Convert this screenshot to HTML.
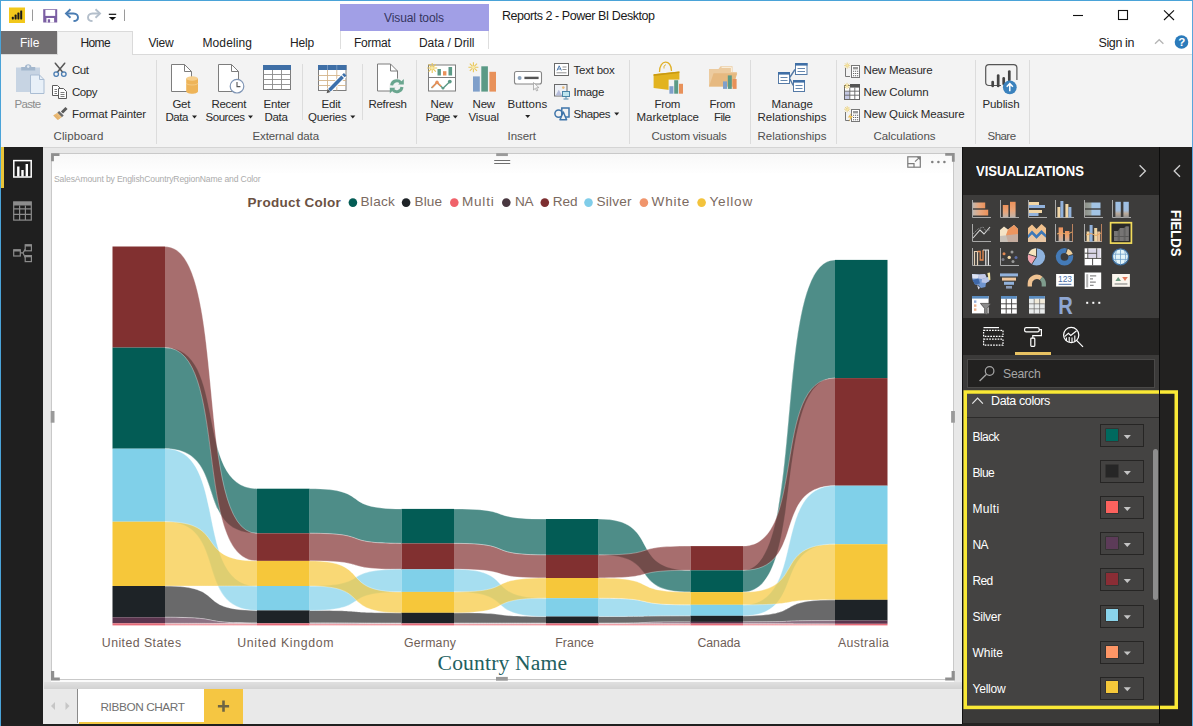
<!DOCTYPE html>
<html>
<head>
<meta charset="utf-8">
<title>Reports 2 - Power BI Desktop</title>
<style>
*{box-sizing:border-box;margin:0;padding:0}
html,body{width:1193px;height:726px;overflow:hidden;background:#fff}
body{font-family:"Liberation Sans",sans-serif;font-size:12px;color:#222;position:relative}
.abs{position:absolute}
.t{position:absolute;white-space:nowrap;line-height:1}
.c{transform:translateX(-50%);text-align:center}
svg{position:absolute;overflow:visible}
/* window frame */
#frame-top{left:0;top:0;width:1193px;height:1px;background:#4aa3d8}
#frame-left{left:0;top:0;width:1px;height:726px;background:#4aa3d8}
/* title bar */
#titlebar{left:0;top:0;width:1193px;height:32px;background:#fff}
#vistools{left:340px;top:4px;width:149px;height:27px;background:#a19fe6}
/* tab row */
#tabrow{left:0;top:32px;width:1193px;height:23px;background:#fff}
#filetab{left:1px;top:31px;width:56px;height:23px;background:#706e6f}
#hometab{left:57px;top:31px;width:75.5px;height:24px;background:#f3f3f3;border:1px solid #dadada;border-bottom:none}
#vtabs{left:340px;top:31px;width:149px;height:18px;background:#fff;border-left:1px solid #dedede;border-right:1px solid #dedede}
/* ribbon */
#ribbon{left:1px;top:54px;width:1192px;height:94px;background:#f3f3f3;border-top:1px solid #dadada;border-bottom:1px solid #d0d0d0}
.sep{position:absolute;width:1px;background:#dcdcdc}
.rl{font-size:12px;color:#333}
.gl{font-size:12px;color:#555}
/* left nav */
#leftnav{left:1px;top:147px;width:42px;height:579px;background:#1f1f1f}
/* canvas */
#canvas{left:43px;top:147px;width:919px;height:576px;background:#e8e8e8;border-top:1px solid #d4d4d4}
#visual{left:51px;top:153px;width:903px;height:527px;background:#fff;border:1px solid #c9c9c9;box-shadow:0 2px 0 #fbfbfb}
#vheader{left:52px;top:154px;width:901px;height:19px;background:linear-gradient(#f8f8f8,#fefefe)}
/* page tabs */
#pagetabs{left:43px;top:688.5px;width:919px;height:35.5px;background:#e9e9e9}
#statusbar{left:1px;top:724px;width:1192px;height:2px;background:#202020}
/* right panels */
#vizpane{left:962px;top:147px;width:197.5px;height:579px;background:#252423}
#fieldspane{left:1159.5px;top:147px;width:33.5px;height:579px;background:#222120}
</style>
</head>
<body>
<div class="abs" id="titlebar"></div>
<div class="abs" id="vistools"></div>
<div class="abs" id="tabrow"></div>
<div class="abs" id="vtabs"></div>
<div class="abs" id="filetab"></div>
<div class="abs" id="ribbon"></div>
<div class="abs" id="hometab"></div>
<svg width="1193" height="56" style="left:0;top:0" viewBox="0 0 1193 56" fill="none">
 <!-- pbi logo -->
 <rect x="9" y="7.5" width="16" height="15.5" fill="#f2c81b"/>
 <g fill="#1a1a1a"><rect x="11.8" y="16.8" width="2" height="2.6" rx=".6"/><rect x="14.6" y="14.6" width="2" height="4.8" rx=".6"/><rect x="17.4" y="12.6" width="2" height="6.8" rx=".6"/><rect x="20.2" y="10.4" width="2" height="9" rx=".6"/></g>
 <path d="M32.5 9.5 V21" stroke="#9a9a9a"/>
 <!-- save -->
 <path d="M43.2 9.2 H57.2 V22.5 H43.2 Z" fill="#7b5fa3"/>
 <rect x="45.4" y="9.9" width="9.8" height="6" fill="#fff"/>
 <rect x="46.4" y="18" width="7.7" height="4.5" fill="#fff"/><rect x="47.8" y="19.3" width="2.3" height="3.2" fill="#7b5fa3"/>
 <!-- undo -->
 <path d="M66.5 13.5 H73.5 C77 13.5 78 16 78 17.5 C78 19.5 76.5 21 73.5 21" stroke="#4a7db3" stroke-width="1.9"/>
 <path d="M70.5 9.3 L66 13.5 L70.5 17.7" stroke="#4a7db3" stroke-width="1.9"/>
 <!-- redo -->
 <path d="M99.5 13.5 H92.5 C89 13.5 88 16 88 17.5 C88 19.5 89.5 21 92.5 21" stroke="#b4bfcb" stroke-width="1.9"/>
 <path d="M95.5 9.3 L100 13.5 L95.5 17.7" stroke="#b4bfcb" stroke-width="1.9"/>
 <!-- qat dropdown -->
 <path d="M108.8 14.3 H116.2" stroke="#111" stroke-width="1.2"/><path d="M108.8 17 H116.2 L112.5 20.3 Z" fill="#111"/>
 <path d="M124.5 9.5 V21" stroke="#9a9a9a"/>
 <!-- window controls -->
 <path d="M1073 15.5 H1083" stroke="#111" stroke-width="1.1"/>
 <rect x="1118.5" y="10.5" width="9" height="9" stroke="#111" stroke-width="1.1"/>
 <path d="M1164 10.3 L1174 20 M1174 10.3 L1164 20" stroke="#111" stroke-width="1.1"/>
 <!-- collapse caret + help -->
 <path d="M1155 43.7 L1159.2 39.7 L1163.4 43.7" stroke="#b5b5b5" stroke-width="1.3"/>
 <circle cx="1181.5" cy="42" r="6.8" fill="#2b7bbb"/>
</svg>
<div class="t" style="left:1178.3px;top:36.5px;font-size:11.5px;font-weight:bold;color:#fff">?</div>
<div class="t" style="left:384px;top:11.8px;font-size:12px;color:#35355f;letter-spacing:-0.096px">Visual tools</div>
<div class="t" style="left:502px;top:10px;font-size:12.5px;color:#1a1a1a;letter-spacing:-0.459px">Reports 2 - Power BI Desktop</div>
<div class="t" style="left:20px;top:37px;font-size:12px;color:#fff;letter-spacing:0.039px">File</div>
<div class="t" style="left:80.5px;top:37px;font-size:12px;color:#222;letter-spacing:-0.629px">Home</div>
<div class="t" style="left:148.5px;top:37px;font-size:12px;color:#222;letter-spacing:-0.199px">View</div>
<div class="t" style="left:202.5px;top:37px;font-size:12px;color:#222;letter-spacing:0.100px">Modeling</div>
<div class="t" style="left:290px;top:37px;font-size:12px;color:#222;letter-spacing:-0.172px">Help</div>
<div class="t" style="left:354px;top:37px;font-size:12px;color:#222;letter-spacing:-0.253px">Format</div>
<div class="t" style="left:419px;top:37px;font-size:12px;color:#222;letter-spacing:-0.043px">Data / Drill</div>
<div class="t" style="left:1098.5px;top:36.5px;font-size:12.5px;color:#222;letter-spacing:-0.391px">Sign in</div>

<style>
.r{font-size:11.5px;color:#2a2a2a}
.g{font-size:11.5px;color:#505050;top:131.3px}
</style>
<!-- separators -->
<div class="sep" style="left:156px;top:60px;height:84px"></div>
<div class="sep" style="left:302px;top:64px;height:56px"></div>
<div class="sep" style="left:362px;top:64px;height:56px"></div>
<div class="sep" style="left:416px;top:60px;height:84px"></div>
<div class="sep" style="left:629px;top:60px;height:84px"></div>
<div class="sep" style="left:750px;top:60px;height:84px"></div>
<div class="sep" style="left:836px;top:60px;height:84px"></div>
<div class="sep" style="left:975px;top:60px;height:84px"></div>
<div class="sep" style="left:1029px;top:60px;height:84px"></div>
<!-- clipboard -->
<div class="t r" style="left:14.5px;top:98.5px;color:#8c8c8c;letter-spacing:-0.684px">Paste</div>
<div class="t r" style="left:72px;top:64.5px;letter-spacing:-0.469px">Cut</div>
<div class="t r" style="left:72px;top:86.5px;letter-spacing:-0.465px">Copy</div>
<div class="t r" style="left:72px;top:108.5px;letter-spacing:-0.147px">Format Painter</div>
<div class="t g" style="left:53.5px;letter-spacing:0.085px">Clipboard</div>
<!-- external data -->
<div class="t r" style="left:172.5px;top:98.5px;letter-spacing:-0.349px">Get</div>
<div class="t r" style="left:165.5px;top:111.5px;letter-spacing:-0.449px">Data</div>
<div class="t r" style="left:211.5px;top:98.5px;letter-spacing:-0.323px">Recent</div>
<div class="t r" style="left:205.5px;top:111.5px;letter-spacing:-0.455px">Sources</div>
<div class="t r" style="left:263.5px;top:98.5px;letter-spacing:-0.200px">Enter</div>
<div class="t r" style="left:264.5px;top:111.5px;letter-spacing:-0.324px">Data</div>
<div class="t r" style="left:321.5px;top:98.5px;letter-spacing:-0.207px">Edit</div>
<div class="t r" style="left:308px;top:111.5px;letter-spacing:-0.254px">Queries</div>
<div class="t r" style="left:368.5px;top:98.5px;letter-spacing:-0.326px">Refresh</div>
<div class="t g" style="left:252.5px;letter-spacing:-0.097px">External data</div>
<!-- insert -->
<div class="t r" style="left:430.5px;top:98.5px;letter-spacing:-0.172px">New</div>
<div class="t r" style="left:425.5px;top:111.5px;letter-spacing:-0.715px">Page</div>
<div class="t r" style="left:472.5px;top:98.5px;letter-spacing:-0.172px">New</div>
<div class="t r" style="left:468.5px;top:111.5px;letter-spacing:-0.104px">Visual</div>
<div class="t r" style="left:507.5px;top:98.5px;letter-spacing:0.143px">Buttons</div>
<div class="t r" style="left:573.5px;top:64.5px;letter-spacing:-0.229px">Text box</div>
<div class="t r" style="left:573.5px;top:86.5px;letter-spacing:-0.294px">Image</div>
<div class="t r" style="left:573.5px;top:108.5px;letter-spacing:-0.419px">Shapes</div>
<div class="t g" style="left:507.5px;letter-spacing:-0.044px">Insert</div>
<!-- custom visuals -->
<div class="t r" style="left:654.5px;top:98.5px;letter-spacing:-0.336px">From</div>
<div class="t r" style="left:636.5px;top:111.5px;letter-spacing:-0.013px">Marketplace</div>
<div class="t r" style="left:709.5px;top:98.5px;letter-spacing:-0.336px">From</div>
<div class="t r" style="left:714px;top:111.5px;letter-spacing:-0.508px">File</div>
<div class="t g" style="left:651.5px;letter-spacing:-0.212px">Custom visuals</div>
<!-- relationships -->
<div class="t r" style="left:771.5px;top:98.5px;letter-spacing:-0.010px">Manage</div>
<div class="t r" style="left:757.5px;top:111.5px;letter-spacing:-0.004px">Relationships</div>
<div class="t g" style="left:757.5px;letter-spacing:-0.004px">Relationships</div>
<!-- calculations -->
<div class="t r" style="left:863.5px;top:64.5px;letter-spacing:-0.178px">New Measure</div>
<div class="t r" style="left:863.5px;top:86.5px;letter-spacing:-0.083px">New Column</div>
<div class="t r" style="left:863.5px;top:108.5px;letter-spacing:-0.150px">New Quick Measure</div>
<div class="t g" style="left:873.5px;letter-spacing:-0.055px">Calculations</div>
<!-- share -->
<div class="t r" style="left:982.5px;top:98.5px;letter-spacing:-0.103px">Publish</div>
<div class="t g" style="left:987.5px;letter-spacing:-0.537px">Share</div>
<!-- dropdown arrows -->
<svg width="1193" height="148" style="left:0;top:0" viewBox="0 0 1193 148" fill="#222">
 <path d="M192 115.5 h5 l-2.5 3z"/><path d="M248 115.5 h5 l-2.5 3z"/><path d="M350.3 115.5 h5 l-2.5 3z"/>
 <path d="M452.8 115.5 h5 l-2.5 3z"/><path d="M525.2 115 h5 l-2.5 3z"/><path d="M614.2 112.5 h5 l-2.5 3z"/>
</svg>
<svg width="1193" height="148" style="left:0;top:0" viewBox="0 0 1193 148" fill="none">
<defs>
 <g id="sun" stroke="#e9c75a" stroke-width="1.1"><path d="M0 -5 V5 M-5 0 H5 M-3.6 -3.6 L3.6 3.6 M-3.6 3.6 L3.6 -3.6"/><circle r="1.6" fill="#f7e9a8" stroke="none"/></g>
 <g id="page"><path d="M0.5 0.5 H13.5 L20.5 7.5 V27.5 H0.5 Z" fill="#fff" stroke="#7d7d7d"/><path d="M13.5 0.5 V7.5 H20.5" stroke="#7d7d7d"/></g>
 <g id="minibars"><rect x="0" y="6" width="4" height="7.5" fill="#7f9fca"/><rect x="4.8" y="0" width="4" height="13.5" fill="#5b9a86"/><rect x="9.6" y="3.6" width="4" height="9.9" fill="#e8915a"/></g>
</defs>
<!-- Paste -->
<rect x="16" y="67.5" width="24" height="24.5" fill="#c7d4e3"/>
<path d="M21.2 70.5 V67 H25 C25 63.4 31.4 63.4 31.4 67 H35.2 V70.5 Z" fill="#a3b7cd"/>
<circle cx="28.2" cy="66.6" r="1.3" fill="#e3eaf2"/>
<path d="M30.5 75 H39.5 L44 79.5 V93.5 H30.5 Z" fill="#e8f0f8" stroke="#aabdd3"/>
<path d="M39.5 75 V79.5 H44" stroke="#aabdd3"/>
<!-- Cut -->
<g stroke="#575757" stroke-width="1.5" stroke-linecap="round"><path d="M55.3 63.2 L62.7 72.3"/><path d="M64.7 63.2 L57.3 72.3"/></g>
<circle cx="56.2" cy="74.1" r="2.3" stroke="#4a7db3" stroke-width="1.3"/><circle cx="63.8" cy="74.1" r="2.3" stroke="#4a7db3" stroke-width="1.3"/>
<!-- Copy -->
<path d="M52.5 85.5 H57.5 L60.5 88.5 V95.5 H52.5 Z" fill="#fff" stroke="#5a5a5a"/>
<path d="M54.5 89.5 H57 M54.5 91.5 H57 M54.5 93.5 H57" stroke="#5a5a5a" stroke-width=".8"/>
<path d="M58.5 88.5 H63.5 L66.5 91.5 V98.5 H58.5 Z" fill="#fff" stroke="#5a5a5a"/>
<path d="M60.5 92.5 H64.5 M60.5 94.5 H64.5 M60.5 96.5 H64.5" stroke="#5a5a5a" stroke-width=".8"/>
<!-- Format painter -->
<path d="M62 112.5 L66.5 108" stroke="#5a5a5a" stroke-width="3"/>
<path d="M58.2 111.8 L62.8 116.4" stroke="#6a6a6a" stroke-width="2.6"/>
<path d="M57.3 112.8 L61.8 117.3 L57.6 120 L53.2 115.6 Z" fill="#ecbc78"/>
<path d="M55.2 114.6 L59.6 119 M54 115.2 L58.4 119.6" stroke="#d9a55c" stroke-width=".6"/>
<!-- Get Data -->
<use href="#page" x="171" y="64"/>
<path d="M186.2 78.5 V91.3 C186.2 94.6 198 94.6 198 91.3 V78.5 Z" fill="#eeb458"/>
<ellipse cx="192.1" cy="78.5" rx="5.9" ry="2.2" fill="#f6cf8e"/>
<path d="M186.2 83 C186.2 85.6 198 85.6 198 83" stroke="#f6cf8e" stroke-width=".8"/>
<!-- Recent Sources -->
<use href="#page" x="218" y="64"/>
<circle cx="237" cy="86.2" r="6.8" fill="#fff" stroke="#7f95b5" stroke-width="1.2"/>
<path d="M237 82 V86.6 H240.4" stroke="#555" stroke-width="1.1"/>
<!-- Enter Data -->
<rect x="263.5" y="65.5" width="27" height="24" fill="#fff" stroke="#7d7d7d"/>
<rect x="263" y="65" width="28" height="5" fill="#3f6fa6"/>
<path d="M263.5 74.5 H290.5 M263.5 79.5 H290.5 M263.5 84.5 H290.5 M272.5 70 V89.5 M281.5 70 V89.5" stroke="#8a8a8a" stroke-width=".9"/>
<!-- Edit Queries -->
<rect x="318.5" y="65.5" width="27.5" height="25" fill="#fff" stroke="#7d7d7d"/>
<rect x="318" y="65" width="28.5" height="5" fill="#3f6fa6"/>
<path d="M318.5 75.5 H346 M318.5 80.5 H346 M318.5 85.5 H346 M327.5 70 V90.5 M336.8 70 V90.5" stroke="#d4b48a" stroke-width=".9"/>
<path d="M327.5 65 V70 M336.8 65 V70" stroke="#7fa0c8" stroke-width=".8"/>
<path d="M329.2 90.4 L344.2 75.2" stroke="#fff" stroke-width="5.5"/>
<path d="M329.4 90.2 L342.6 76.8" stroke="#3c70ab" stroke-width="3.6"/>
<path d="M343.4 76 L345.2 74.2" stroke="#3c70ab" stroke-width="3.6"/>
<path d="M326.6 93.2 L327.6 89.3 L330.4 92.1 Z" fill="#555"/>
<!-- Refresh -->
<use href="#page" x="377" y="63.5"/>
<circle cx="396.8" cy="86.2" r="7.6" fill="#f3f3f3"/>
<path d="M391.6 85.4 A5.3 5.3 0 0 1 400.9 82.6" stroke="#6aa68f" stroke-width="3"/>
<path d="M402 87 A5.3 5.3 0 0 1 392.7 89.8" stroke="#6aa68f" stroke-width="3"/>
<path d="M398.2 84.6 H403.8 V79 Z" fill="#6aa68f"/><path d="M395.4 87.8 H389.8 V93.4 Z" fill="#6aa68f"/>
</svg>
<svg width="1193" height="148" style="left:0;top:0" viewBox="0 0 1193 148" fill="none">
<!-- New Page -->
<rect x="428.5" y="65" width="27" height="26" fill="#fff" stroke="#7d7d7d"/>
<path d="M428.5 77.5 H455.5" stroke="#7d7d7d"/>
<rect x="437.5" y="69" width="3.4" height="6.5" fill="#5b9a86"/><rect x="443" y="71.2" width="3.4" height="4.3" fill="#e8915a"/><rect x="448.5" y="67" width="3.6" height="8.5" fill="#5b9a86"/>
<path d="M431.5 88 L437 82.5 L443 88.2 L449.5 82" stroke="#5b9a86" stroke-width="1.4"/>
<path d="M432 87.6 L437 82.5 L441 86.2" stroke="#e8915a" stroke-width="1.6"/>
<circle cx="437" cy="82.3" r="1.7" fill="#e8915a"/><circle cx="449.8" cy="81.6" r="1.9" fill="#5b9a86"/><circle cx="443" cy="88.2" r="1.3" fill="#5b9a86"/>
<use href="#sun" x="432.2" y="68"/>
<!-- New Visual -->
<rect x="473" y="76.4" width="6.8" height="15.2" fill="#7f9fca"/><rect x="481.3" y="66.3" width="6.6" height="25.3" fill="#5b9a86"/><rect x="489.4" y="71.8" width="6.6" height="19.8" fill="#e8915a"/>
<use href="#sun" x="473.4" y="67.3"/>
<!-- Buttons -->
<rect x="514.5" y="71.5" width="27" height="12.5" rx="2" fill="#fff" stroke="#868686" stroke-width="1.1"/>
<circle cx="519.6" cy="77.9" r="2" fill="#8ba3bd"/><path d="M524.4 77.9 H538.6" stroke="#555" stroke-width="2.4"/>
<path d="M533.5 82.5 V90 L535.3 88.3 L536.6 91 L537.8 90.4 L536.5 87.8 L538.9 87.6 Z" fill="#f8f8f8" stroke="#999" stroke-width=".7"/>
<!-- Text box -->
<rect x="554.5" y="63.5" width="14" height="12" fill="#fff" stroke="#6a6a6a"/>
<path d="M557 70.5 L559.2 65.8 L561.4 70.5 M557.8 69 H560.6" stroke="#3f6fa6" stroke-width=".9"/><path d="M562.5 67 H566.5 M562.5 69.5 H566.5 M556.5 72.8 H566.5" stroke="#777" stroke-width=".8"/>
<!-- Image -->
<rect x="554.5" y="84.5" width="12.5" height="11.5" fill="#eef1f6" stroke="#6a6a6a"/>
<circle cx="563.3" cy="87.6" r="1.3" fill="#e8b878"/><path d="M555.5 95.5 L558.8 89.8 L562 95.5 Z" fill="#b6bddb"/>
<rect x="562.5" y="91.5" width="7" height="5" fill="#bfe6ee" stroke="#4a86a8"/><path d="M566 96.5 V98.6 M563.5 99 H568.5" stroke="#4a86a8"/>
<!-- Shapes -->
<circle cx="558.6" cy="113.6" r="3.7" stroke="#3f75aa" stroke-width="1.5"/>
<rect x="561.8" y="108" width="7.2" height="9" stroke="#3f75aa" stroke-width="1.5"/>
<path d="M563.3 112 L560 119.8 H566.6 Z" fill="#f3f3f3" stroke="#3f75aa" stroke-width="1.5" stroke-linejoin="round"/>
<!-- From Marketplace -->
<path d="M659.5 72 C659.5 59 671.5 59 671.5 71" stroke="#e0b22a" stroke-width="1.3"/>
<path d="M664 68.5 V66 M664 66 L666 64.6" stroke="#e0b22a" stroke-width=".9"/>
<path d="M653.6 74.2 L679.4 71.4 V91.2 L653.6 88 Z" fill="#e2b31f"/>
<path d="M653.6 74.2 L679.4 71.4 L679.4 73 L653.6 76 Z" fill="#c99a10"/>
<rect x="668.6" y="79.6" width="15.2" height="14.6" fill="#f3f3f3"/>
<use href="#minibars" x="669.4" y="80.2"/>
<!-- From File -->
<path d="M709 86.4 V69 H718.5 L720.5 66.2 H732.5 V72 H737 L733.2 86.4 Z" fill="#eccb9f"/>
<path d="M709 86.4 L713.6 73.2 H737.2 L733.2 86.4 Z" fill="#e6b980"/>
<path d="M721.6 67.4 H731.4 V72" stroke="#fbf1df" stroke-width="1"/>
<rect x="722" y="74.8" width="15.4" height="14.4" fill="#f3f3f3" fill-opacity=".0"/>
<use href="#minibars" x="723" y="75.4"/>
<!-- Manage relationships -->
<path d="M789.7 77.5 L795 69.5 M789.7 78.5 L793.2 85.5" stroke="#557aa6" stroke-width="1.4"/>
<g stroke="#557aa6"><rect x="778.5" y="72.5" width="11" height="11" fill="#fff"/><rect x="795.5" y="63.5" width="11.5" height="11" fill="#fff"/><rect x="793.5" y="80.5" width="11" height="11" fill="#fff"/></g>
<g fill="#3f6fa6"><rect x="778" y="72" width="12" height="2.6"/><rect x="795" y="63" width="12.5" height="2.6"/><rect x="793" y="80" width="12" height="2.6"/></g>
<path d="M780.5 77.5 H787.5 M780.5 80.5 H787.5 M797.5 68.5 H805 M797.5 71.5 H805 M795.5 85.5 H802.5 M795.5 88.5 H802.5" stroke="#557aa6" stroke-width=".9"/>
<!-- New Measure -->
<g id="calc"><path d="M845.5 68 V76.5 H850" stroke="#777"/><rect x="851.5" y="65.5" width="8" height="12" fill="#fff" stroke="#777"/><rect x="853" y="67" width="5" height="2.4" fill="#999"/>
<path d="M853 71.3 h1.2 M855 71.3 h1.2 M857 71.3 h1.2 M853 73.5 h1.2 M855 73.5 h1.2 M857 73.5 h1.2 M853 75.7 h1.2 M855 75.7 h1.2 M857 75.7 h1.2" stroke="#666" stroke-width="1.1"/></g>
<g transform="translate(847.2 65.6) scale(.62)"><use href="#sun"/></g>
<!-- New Column -->
<rect x="844.5" y="85.5" width="15" height="14" fill="#fff" stroke="#666"/>
<rect x="850" y="84" width="10" height="3.6" fill="#555"/>
<rect x="845" y="91.5" width="4.6" height="7.5" fill="#c4c8e3"/>
<path d="M844.5 91.2 H859.5 M844.5 95.2 H859.5 M849.8 87.5 V99.5 M854.8 87.5 V99.5" stroke="#666" stroke-width=".9"/>
<g transform="translate(847 86) scale(.62)"><use href="#sun"/></g>
<!-- New Quick Measure -->
<use href="#calc" y="44"/>
<g transform="translate(847.2 109.2) scale(.62)"><use href="#sun"/></g>
<path d="M851.5 112.5 L847.8 117.6 H850.2 L848.6 122 L853 116 H850.4 Z" fill="#eec25a"/>
<!-- Publish -->
<path d="M1001 85.5 H989 Q985.7 85.5 985.7 82.3 V67.8 Q985.7 64.6 989 64.6 H1013.6 Q1016.9 64.6 1016.9 67.8 V80" stroke="#555" stroke-width="1.2"/>
<g stroke="#444" stroke-width="2.7" stroke-linecap="round"><path d="M992.7 82 V86"/><path d="M998.2 75.6 V86"/><path d="M1003.7 78.4 V84"/><path d="M1009.3 71.6 V80"/></g>
<circle cx="1009.8" cy="87.3" r="6.9" fill="#3b82bd"/>
<path d="M1009.8 91.2 V84 M1006.7 86.7 L1009.8 83.6 L1012.9 86.7" stroke="#fff" stroke-width="1.5"/>
</svg>



<div class="abs" id="leftnav"></div>
<div class="abs" style="left:1px;top:147px;width:3px;height:41px;background:#e8c43a"></div>
<svg width="44" height="300" style="left:0;top:0" viewBox="0 0 44 300" fill="none">
 <!-- report -->
 <rect x="13.8" y="160.6" width="17.4" height="16.4" stroke="#fff" stroke-width="1.5"/>
 <path d="M18.3 176.5 V166.5 M22.5 176.5 V170 M26.8 176.5 V164" stroke="#fff" stroke-width="2.4"/>
 <!-- data -->
 <g stroke="#8c8c8c" stroke-width="1.2"><rect x="13.7" y="201.9" width="17.6" height="18.2"/>
 <path d="M13.7 208.8 H31.3 M13.7 214.4 H31.3 M19.6 205.5 V220 M25.4 205.5 V220"/></g>
 <rect x="13.7" y="201.9" width="17.6" height="3.6" fill="#8c8c8c"/>
 <!-- model -->
 <g stroke="#8c8c8c" stroke-width="1.2"><rect x="13.7" y="249.8" width="6.6" height="6.2"/><rect x="25.2" y="244.8" width="6.2" height="6"/><rect x="25.2" y="255.6" width="6.2" height="6"/>
 <path d="M20.3 252.9 H23 M23 252.9 L25.2 249.4 M23 252.9 L25.2 257.6"/></g>
 <path d="M13.7 250.4 H20.3 M25.2 245.4 H31.4 M25.2 256.2 H31.4" stroke="#8c8c8c" stroke-width="2"/>
</svg>

<div class="abs" id="canvas"></div>
<div class="abs" id="visual"></div>
<div class="abs" id="vheader"></div>
<!-- visual chrome -->
<svg width="1193" height="726" style="left:0;top:0" viewBox="0 0 1193 726" fill="none">
 <!-- corner handles -->
 <g stroke="#8f8f8f" stroke-width="2.8">
  <path d="M52.5 161.3 V154.7 H59.5"/><path d="M945.2 154.4 H953.3 V161.7"/>
 </g>
 <g stroke="#8f8f8f" stroke-width="3.2">
  <path d="M52.6 671 V679 H59.8"/><path d="M945.2 679 H953.2 V671"/>
 </g>
 <g stroke="#9a9a9a" stroke-width="3.8">
  <path d="M52.6 411 V422.7"/><path d="M953 411 V422.7"/><path d="M496 678.8 H507.8"/>
 </g>
 <!-- drag grip -->
 <g stroke="#6e6e6e" stroke-width="1.1"><path d="M494.2 160.5 H510.2 M494.2 163.5 H510.2"/></g>
 <path d="M496.2 154.6 H507.9" stroke="#9a9a9a" stroke-width="2.9"/>
 <!-- focus icon -->
 <g stroke="#7c7c7c" stroke-width="1.2"><rect x="907.8" y="156.8" width="12.5" height="10.4"/><path d="M907.8 163.6 H914 V167.2"/><path d="M915 161.6 L919.6 157.4"/></g>
 <path d="M916.6 156.8 H920.3 V160.4 Z" fill="#7c7c7c"/>
 <g fill="#808080"><circle cx="932.3" cy="162" r="1.3"/><circle cx="938.4" cy="162" r="1.3"/><circle cx="944.4" cy="162" r="1.3"/></g>
</svg>
<div class="t" style="left:54px;top:174.6px;font-size:8.6px;color:#ababab;letter-spacing:-0.134px">SalesAmount by EnglishCountryRegionName and Color</div>
<!-- legend -->
<div class="t" id="lgt" style="left:247.6px;top:195.5px;font-size:13.5px;font-weight:bold;color:#6b5142;letter-spacing:0.269px">Product Color</div>
<div class="t lg" style="left:360.5px;letter-spacing:0.290px">Black</div>
<div class="t lg" style="left:414.4px;letter-spacing:0.170px">Blue</div>
<div class="t lg" style="left:461.9px;letter-spacing:0.799px">Multi</div>
<div class="t lg" style="left:514.9px;letter-spacing:-0.145px">NA</div>
<div class="t lg" style="left:552.7px;letter-spacing:-0.013px">Red</div>
<div class="t lg" style="left:596.4px;letter-spacing:0.250px">Silver</div>
<div class="t lg" style="left:651.6px;letter-spacing:0.730px">White</div>
<div class="t lg" style="left:709.5px;letter-spacing:0.784px">Yellow</div>
<svg width="1193" height="726" style="left:0;top:0" viewBox="0 0 1193 726">
 <circle cx="352.9" cy="202.6" r="4.3" fill="#035c55"/>
 <circle cx="406.1" cy="202.6" r="4.3" fill="#1e2327"/>
 <circle cx="454.3" cy="202.6" r="4.3" fill="#f0626a"/>
 <circle cx="506.3" cy="202.6" r="4.3" fill="#493840"/>
 <circle cx="544.8" cy="202.6" r="4.3" fill="#7d2e30"/>
 <circle cx="588.5" cy="202.6" r="4.3" fill="#80cde9"/>
 <circle cx="643.9" cy="202.6" r="4.3" fill="#f0956c"/>
 <circle cx="701.6" cy="202.6" r="4.3" fill="#f3c33c"/>
</svg>
<style>.lg{top:195.1px;font-size:13.6px;color:#7b6a5f}
.ax{top:637.2px;font-size:12.3px;color:#6f6057}</style>
<svg id="chart" width="1193" height="726" style="left:0;top:0" viewBox="0 0 1193 726">
<path d="M165.0,347.6 C229.4,347.6 192.6,488.7 257.0,488.7 L257.0,533.3 C192.6,533.3 229.4,448.7 165.0,448.7 Z" fill="#035c55" fill-opacity="0.7"/>
<path d="M165.0,347.6 C229.4,347.6 192.6,488.7 257.0,488.7 M257.0,533.3 C192.6,533.3 229.4,448.7 165.0,448.7" fill="none" stroke="#fff" stroke-opacity="0.4" stroke-width="0.8"/>
<path d="M309.5,488.7 C373.9,488.7 337.1,508.9 401.5,508.9 L401.5,543.4 C337.1,543.4 373.9,533.3 309.5,533.3 Z" fill="#035c55" fill-opacity="0.7"/>
<path d="M309.5,488.7 C373.9,488.7 337.1,508.9 401.5,508.9 M401.5,543.4 C337.1,543.4 373.9,533.3 309.5,533.3" fill="none" stroke="#fff" stroke-opacity="0.4" stroke-width="0.8"/>
<path d="M454.0,508.9 C518.4,508.9 481.6,519.0 546.0,519.0 L546.0,554.9 C481.6,554.9 518.4,543.4 454.0,543.4 Z" fill="#035c55" fill-opacity="0.7"/>
<path d="M454.0,508.9 C518.4,508.9 481.6,519.0 546.0,519.0 M546.0,554.9 C481.6,554.9 518.4,543.4 454.0,543.4" fill="none" stroke="#fff" stroke-opacity="0.4" stroke-width="0.8"/>
<path d="M598.5,519.0 C662.9,519.0 626.1,570.3 690.5,570.3 L690.5,592.1 C626.1,592.1 662.9,554.9 598.5,554.9 Z" fill="#035c55" fill-opacity="0.7"/>
<path d="M598.5,519.0 C662.9,519.0 626.1,570.3 690.5,570.3 M690.5,592.1 C626.1,592.1 662.9,554.9 598.5,554.9" fill="none" stroke="#fff" stroke-opacity="0.4" stroke-width="0.8"/>
<path d="M743.0,570.3 C807.4,570.3 770.6,259.9 835.0,259.9 L835.0,378.1 C770.6,378.1 807.4,592.1 743.0,592.1 Z" fill="#035c55" fill-opacity="0.7"/>
<path d="M743.0,570.3 C807.4,570.3 770.6,259.9 835.0,259.9 M835.0,378.1 C770.6,378.1 807.4,592.1 743.0,592.1" fill="none" stroke="#fff" stroke-opacity="0.4" stroke-width="0.8"/>
<path d="M165.0,586.0 C229.4,586.0 192.6,610.4 257.0,610.4 L257.0,623.0 C192.6,623.0 229.4,617.3 165.0,617.3 Z" fill="#2a2a2b" fill-opacity="0.7"/>
<path d="M165.0,586.0 C229.4,586.0 192.6,610.4 257.0,610.4 M257.0,623.0 C192.6,623.0 229.4,617.3 165.0,617.3" fill="none" stroke="#fff" stroke-opacity="0.4" stroke-width="0.8"/>
<path d="M309.5,610.4 C373.9,610.4 337.1,612.8 401.5,612.8 L401.5,623.2 C337.1,623.2 373.9,623.0 309.5,623.0 Z" fill="#2a2a2b" fill-opacity="0.7"/>
<path d="M309.5,610.4 C373.9,610.4 337.1,612.8 401.5,612.8 M401.5,623.2 C337.1,623.2 373.9,623.0 309.5,623.0" fill="none" stroke="#fff" stroke-opacity="0.4" stroke-width="0.8"/>
<path d="M454.0,612.8 C518.4,612.8 481.6,616.5 546.0,616.5 L546.0,623.2 C481.6,623.2 518.4,623.2 454.0,623.2 Z" fill="#2a2a2b" fill-opacity="0.7"/>
<path d="M454.0,612.8 C518.4,612.8 481.6,616.5 546.0,616.5 M546.0,623.2 C481.6,623.2 518.4,623.2 454.0,623.2" fill="none" stroke="#fff" stroke-opacity="0.4" stroke-width="0.8"/>
<path d="M598.5,616.5 C662.9,616.5 626.1,615.8 690.5,615.8 L690.5,621.9 C626.1,621.9 662.9,623.2 598.5,623.2 Z" fill="#2a2a2b" fill-opacity="0.7"/>
<path d="M598.5,616.5 C662.9,616.5 626.1,615.8 690.5,615.8 M690.5,621.9 C626.1,621.9 662.9,623.2 598.5,623.2" fill="none" stroke="#fff" stroke-opacity="0.4" stroke-width="0.8"/>
<path d="M743.0,615.8 C807.4,615.8 770.6,599.8 835.0,599.8 L835.0,620.5 C770.6,620.5 807.4,621.9 743.0,621.9 Z" fill="#2a2a2b" fill-opacity="0.7"/>
<path d="M743.0,615.8 C807.4,615.8 770.6,599.8 835.0,599.8 M835.0,620.5 C770.6,620.5 807.4,621.9 743.0,621.9" fill="none" stroke="#fff" stroke-opacity="0.4" stroke-width="0.8"/>
<path d="M165.0,623.3 C229.4,623.3 192.6,623.4 257.0,623.4 L257.0,625.4 C192.6,625.4 229.4,625.4 165.0,625.4 Z" fill="#e8707c" fill-opacity="0.7"/>
<path d="M165.0,623.3 C229.4,623.3 192.6,623.4 257.0,623.4 M257.0,625.4 C192.6,625.4 229.4,625.4 165.0,625.4" fill="none" stroke="#fff" stroke-opacity="0.4" stroke-width="0.8"/>
<path d="M309.5,623.4 C373.9,623.4 337.1,623.5 401.5,623.5 L401.5,625.4 C337.1,625.4 373.9,625.4 309.5,625.4 Z" fill="#e8707c" fill-opacity="0.7"/>
<path d="M309.5,623.4 C373.9,623.4 337.1,623.5 401.5,623.5 M401.5,625.4 C337.1,625.4 373.9,625.4 309.5,625.4" fill="none" stroke="#fff" stroke-opacity="0.4" stroke-width="0.8"/>
<path d="M454.0,623.5 C518.4,623.5 481.6,623.5 546.0,623.5 L546.0,625.4 C481.6,625.4 518.4,625.4 454.0,625.4 Z" fill="#e8707c" fill-opacity="0.7"/>
<path d="M454.0,623.5 C518.4,623.5 481.6,623.5 546.0,623.5 M546.0,625.4 C481.6,625.4 518.4,625.4 454.0,625.4" fill="none" stroke="#fff" stroke-opacity="0.4" stroke-width="0.8"/>
<path d="M598.5,623.5 C662.9,623.5 626.1,623.6 690.5,623.6 L690.5,625.4 C626.1,625.4 662.9,625.4 598.5,625.4 Z" fill="#e8707c" fill-opacity="0.7"/>
<path d="M598.5,623.5 C662.9,623.5 626.1,623.6 690.5,623.6 M690.5,625.4 C626.1,625.4 662.9,625.4 598.5,625.4" fill="none" stroke="#fff" stroke-opacity="0.4" stroke-width="0.8"/>
<path d="M743.0,623.6 C807.4,623.6 770.6,623.8 835.0,623.8 L835.0,625.4 C770.6,625.4 807.4,625.4 743.0,625.4 Z" fill="#e8707c" fill-opacity="0.7"/>
<path d="M743.0,623.6 C807.4,623.6 770.6,623.8 835.0,623.8 M835.0,625.4 C770.6,625.4 807.4,625.4 743.0,625.4" fill="none" stroke="#fff" stroke-opacity="0.4" stroke-width="0.8"/>
<path d="M165.0,617.3 C229.4,617.3 192.6,623.0 257.0,623.0 L257.0,623.4 C192.6,623.4 229.4,623.3 165.0,623.3 Z" fill="#5a344e" fill-opacity="0.7"/>
<path d="M165.0,617.3 C229.4,617.3 192.6,623.0 257.0,623.0 M257.0,623.4 C192.6,623.4 229.4,623.3 165.0,623.3" fill="none" stroke="#fff" stroke-opacity="0.4" stroke-width="0.8"/>
<path d="M309.5,623.0 C373.9,623.0 337.1,623.2 401.5,623.2 L401.5,623.5 C337.1,623.5 373.9,623.4 309.5,623.4 Z" fill="#5a344e" fill-opacity="0.7"/>
<path d="M309.5,623.0 C373.9,623.0 337.1,623.2 401.5,623.2 M401.5,623.5 C337.1,623.5 373.9,623.4 309.5,623.4" fill="none" stroke="#fff" stroke-opacity="0.4" stroke-width="0.8"/>
<path d="M454.0,623.2 C518.4,623.2 481.6,623.2 546.0,623.2 L546.0,623.5 C481.6,623.5 518.4,623.5 454.0,623.5 Z" fill="#5a344e" fill-opacity="0.7"/>
<path d="M454.0,623.2 C518.4,623.2 481.6,623.2 546.0,623.2 M546.0,623.5 C481.6,623.5 518.4,623.5 454.0,623.5" fill="none" stroke="#fff" stroke-opacity="0.4" stroke-width="0.8"/>
<path d="M598.5,623.2 C662.9,623.2 626.1,621.9 690.5,621.9 L690.5,623.6 C626.1,623.6 662.9,623.5 598.5,623.5 Z" fill="#5a344e" fill-opacity="0.7"/>
<path d="M598.5,623.2 C662.9,623.2 626.1,621.9 690.5,621.9 M690.5,623.6 C626.1,623.6 662.9,623.5 598.5,623.5" fill="none" stroke="#fff" stroke-opacity="0.4" stroke-width="0.8"/>
<path d="M743.0,621.9 C807.4,621.9 770.6,620.5 835.0,620.5 L835.0,623.8 C770.6,623.8 807.4,623.6 743.0,623.6 Z" fill="#5a344e" fill-opacity="0.7"/>
<path d="M743.0,621.9 C807.4,621.9 770.6,620.5 835.0,620.5 M835.0,623.8 C770.6,623.8 807.4,623.6 743.0,623.6" fill="none" stroke="#fff" stroke-opacity="0.4" stroke-width="0.8"/>
<path d="M165.0,246.5 C229.4,246.5 192.6,533.3 257.0,533.3 L257.0,560.9 C192.6,560.9 229.4,347.6 165.0,347.6 Z" fill="#813030" fill-opacity="0.7"/>
<path d="M165.0,246.5 C229.4,246.5 192.6,533.3 257.0,533.3 M257.0,560.9 C192.6,560.9 229.4,347.6 165.0,347.6" fill="none" stroke="#fff" stroke-opacity="0.4" stroke-width="0.8"/>
<path d="M309.5,533.3 C373.9,533.3 337.1,543.4 401.5,543.4 L401.5,569.3 C337.1,569.3 373.9,560.9 309.5,560.9 Z" fill="#813030" fill-opacity="0.7"/>
<path d="M309.5,533.3 C373.9,533.3 337.1,543.4 401.5,543.4 M401.5,569.3 C337.1,569.3 373.9,560.9 309.5,560.9" fill="none" stroke="#fff" stroke-opacity="0.4" stroke-width="0.8"/>
<path d="M454.0,543.4 C518.4,543.4 481.6,554.9 546.0,554.9 L546.0,578.0 C481.6,578.0 518.4,569.3 454.0,569.3 Z" fill="#813030" fill-opacity="0.7"/>
<path d="M454.0,543.4 C518.4,543.4 481.6,554.9 546.0,554.9 M546.0,578.0 C481.6,578.0 518.4,569.3 454.0,569.3" fill="none" stroke="#fff" stroke-opacity="0.4" stroke-width="0.8"/>
<path d="M598.5,554.9 C662.9,554.9 626.1,546.1 690.5,546.1 L690.5,570.3 C626.1,570.3 662.9,578.0 598.5,578.0 Z" fill="#813030" fill-opacity="0.7"/>
<path d="M598.5,554.9 C662.9,554.9 626.1,546.1 690.5,546.1 M690.5,570.3 C626.1,570.3 662.9,578.0 598.5,578.0" fill="none" stroke="#fff" stroke-opacity="0.4" stroke-width="0.8"/>
<path d="M743.0,546.1 C807.4,546.1 770.6,378.1 835.0,378.1 L835.0,485.7 C770.6,485.7 807.4,570.3 743.0,570.3 Z" fill="#813030" fill-opacity="0.7"/>
<path d="M743.0,546.1 C807.4,546.1 770.6,378.1 835.0,378.1 M835.0,485.7 C770.6,485.7 807.4,570.3 743.0,570.3" fill="none" stroke="#fff" stroke-opacity="0.4" stroke-width="0.8"/>
<path d="M165.0,448.7 C229.4,448.7 192.6,586.0 257.0,586.0 L257.0,610.4 C192.6,610.4 229.4,521.7 165.0,521.7 Z" fill="#80d0e9" fill-opacity="0.7"/>
<path d="M165.0,448.7 C229.4,448.7 192.6,586.0 257.0,586.0 M257.0,610.4 C192.6,610.4 229.4,521.7 165.0,521.7" fill="none" stroke="#fff" stroke-opacity="0.4" stroke-width="0.8"/>
<path d="M309.5,586.0 C373.9,586.0 337.1,569.3 401.5,569.3 L401.5,591.9 C337.1,591.9 373.9,610.4 309.5,610.4 Z" fill="#80d0e9" fill-opacity="0.7"/>
<path d="M309.5,586.0 C373.9,586.0 337.1,569.3 401.5,569.3 M401.5,591.9 C337.1,591.9 373.9,610.4 309.5,610.4" fill="none" stroke="#fff" stroke-opacity="0.4" stroke-width="0.8"/>
<path d="M454.0,569.3 C518.4,569.3 481.6,598.2 546.0,598.2 L546.0,616.5 C481.6,616.5 518.4,591.9 454.0,591.9 Z" fill="#80d0e9" fill-opacity="0.7"/>
<path d="M454.0,569.3 C518.4,569.3 481.6,598.2 546.0,598.2 M546.0,616.5 C481.6,616.5 518.4,591.9 454.0,591.9" fill="none" stroke="#fff" stroke-opacity="0.4" stroke-width="0.8"/>
<path d="M598.5,598.2 C662.9,598.2 626.1,604.8 690.5,604.8 L690.5,615.8 C626.1,615.8 662.9,616.5 598.5,616.5 Z" fill="#80d0e9" fill-opacity="0.7"/>
<path d="M598.5,598.2 C662.9,598.2 626.1,604.8 690.5,604.8 M690.5,615.8 C626.1,615.8 662.9,616.5 598.5,616.5" fill="none" stroke="#fff" stroke-opacity="0.4" stroke-width="0.8"/>
<path d="M743.0,604.8 C807.4,604.8 770.6,485.7 835.0,485.7 L835.0,544.2 C770.6,544.2 807.4,615.8 743.0,615.8 Z" fill="#80d0e9" fill-opacity="0.7"/>
<path d="M743.0,604.8 C807.4,604.8 770.6,485.7 835.0,485.7 M835.0,544.2 C770.6,544.2 807.4,615.8 743.0,615.8" fill="none" stroke="#fff" stroke-opacity="0.4" stroke-width="0.8"/>
<path d="M165.0,521.7 C229.4,521.7 192.6,560.9 257.0,560.9 L257.0,586.0 C192.6,586.0 229.4,586.0 165.0,586.0 Z" fill="#f6c73a" fill-opacity="0.7"/>
<path d="M165.0,521.7 C229.4,521.7 192.6,560.9 257.0,560.9 M257.0,586.0 C192.6,586.0 229.4,586.0 165.0,586.0" fill="none" stroke="#fff" stroke-opacity="0.4" stroke-width="0.8"/>
<path d="M309.5,560.9 C373.9,560.9 337.1,591.9 401.5,591.9 L401.5,612.8 C337.1,612.8 373.9,586.0 309.5,586.0 Z" fill="#f6c73a" fill-opacity="0.7"/>
<path d="M309.5,560.9 C373.9,560.9 337.1,591.9 401.5,591.9 M401.5,612.8 C337.1,612.8 373.9,586.0 309.5,586.0" fill="none" stroke="#fff" stroke-opacity="0.4" stroke-width="0.8"/>
<path d="M454.0,591.9 C518.4,591.9 481.6,578.0 546.0,578.0 L546.0,598.2 C481.6,598.2 518.4,612.8 454.0,612.8 Z" fill="#f6c73a" fill-opacity="0.7"/>
<path d="M454.0,591.9 C518.4,591.9 481.6,578.0 546.0,578.0 M546.0,598.2 C481.6,598.2 518.4,612.8 454.0,612.8" fill="none" stroke="#fff" stroke-opacity="0.4" stroke-width="0.8"/>
<path d="M598.5,578.0 C662.9,578.0 626.1,592.1 690.5,592.1 L690.5,604.8 C626.1,604.8 662.9,598.2 598.5,598.2 Z" fill="#f6c73a" fill-opacity="0.7"/>
<path d="M598.5,578.0 C662.9,578.0 626.1,592.1 690.5,592.1 M690.5,604.8 C626.1,604.8 662.9,598.2 598.5,598.2" fill="none" stroke="#fff" stroke-opacity="0.4" stroke-width="0.8"/>
<path d="M743.0,592.1 C807.4,592.1 770.6,544.2 835.0,544.2 L835.0,599.8 C770.6,599.8 807.4,604.8 743.0,604.8 Z" fill="#f6c73a" fill-opacity="0.7"/>
<path d="M743.0,592.1 C807.4,592.1 770.6,544.2 835.0,544.2 M835.0,599.8 C770.6,599.8 807.4,604.8 743.0,604.8" fill="none" stroke="#fff" stroke-opacity="0.4" stroke-width="0.8"/>
<rect x="112.5" y="246.5" width="52.5" height="101.1" fill="#813030"/>
<rect x="112.5" y="347.6" width="52.5" height="101.1" fill="#035c55"/>
<rect x="112.5" y="448.7" width="52.5" height="73.0" fill="#80d0e9"/>
<rect x="112.5" y="521.7" width="52.5" height="64.3" fill="#f6c73a"/>
<rect x="112.5" y="586.0" width="52.5" height="31.3" fill="#1e2327"/>
<rect x="112.5" y="617.3" width="52.5" height="6.0" fill="#5a344e"/>
<rect x="112.5" y="623.3" width="52.5" height="2.1" fill="#e66a78"/>
<rect x="257.0" y="488.7" width="52.5" height="44.6" fill="#035c55"/>
<rect x="257.0" y="533.3" width="52.5" height="27.6" fill="#813030"/>
<rect x="257.0" y="560.9" width="52.5" height="25.1" fill="#f6c73a"/>
<rect x="257.0" y="586.0" width="52.5" height="24.4" fill="#80d0e9"/>
<rect x="257.0" y="610.4" width="52.5" height="12.6" fill="#1e2327"/>
<rect x="257.0" y="623.0" width="52.5" height="0.4" fill="#5a344e"/>
<rect x="257.0" y="623.4" width="52.5" height="2.0" fill="#e66a78"/>
<rect x="401.5" y="508.9" width="52.5" height="34.5" fill="#035c55"/>
<rect x="401.5" y="543.4" width="52.5" height="25.9" fill="#813030"/>
<rect x="401.5" y="569.3" width="52.5" height="22.6" fill="#80d0e9"/>
<rect x="401.5" y="591.9" width="52.5" height="20.9" fill="#f6c73a"/>
<rect x="401.5" y="612.8" width="52.5" height="10.4" fill="#1e2327"/>
<rect x="401.5" y="623.2" width="52.5" height="0.3" fill="#5a344e"/>
<rect x="401.5" y="623.5" width="52.5" height="1.9" fill="#e66a78"/>
<rect x="546.0" y="519.0" width="52.5" height="35.9" fill="#035c55"/>
<rect x="546.0" y="554.9" width="52.5" height="23.1" fill="#813030"/>
<rect x="546.0" y="578.0" width="52.5" height="20.2" fill="#f6c73a"/>
<rect x="546.0" y="598.2" width="52.5" height="18.3" fill="#80d0e9"/>
<rect x="546.0" y="616.5" width="52.5" height="6.7" fill="#1e2327"/>
<rect x="546.0" y="623.2" width="52.5" height="0.3" fill="#5a344e"/>
<rect x="546.0" y="623.5" width="52.5" height="1.9" fill="#e66a78"/>
<rect x="690.5" y="546.1" width="52.5" height="24.2" fill="#813030"/>
<rect x="690.5" y="570.3" width="52.5" height="21.8" fill="#035c55"/>
<rect x="690.5" y="592.1" width="52.5" height="12.7" fill="#f6c73a"/>
<rect x="690.5" y="604.8" width="52.5" height="11.0" fill="#80d0e9"/>
<rect x="690.5" y="615.8" width="52.5" height="6.1" fill="#1e2327"/>
<rect x="690.5" y="621.9" width="52.5" height="1.7" fill="#5a344e"/>
<rect x="690.5" y="623.6" width="52.5" height="1.8" fill="#e66a78"/>
<rect x="835.0" y="259.9" width="52.5" height="118.2" fill="#035c55"/>
<rect x="835.0" y="378.1" width="52.5" height="107.6" fill="#813030"/>
<rect x="835.0" y="485.7" width="52.5" height="58.5" fill="#80d0e9"/>
<rect x="835.0" y="544.2" width="52.5" height="55.6" fill="#f6c73a"/>
<rect x="835.0" y="599.8" width="52.5" height="20.7" fill="#1e2327"/>
<rect x="835.0" y="620.5" width="52.5" height="3.3" fill="#5a344e"/>
<rect x="835.0" y="623.8" width="52.5" height="1.6" fill="#e66a78"/>
</svg>
<div class="t ax" style="left:101.8px;letter-spacing:0.452px">United States</div>
<div class="t ax" style="left:237.3px;letter-spacing:0.664px">United Kingdom</div>
<div class="t ax" style="left:403.9px;letter-spacing:0.246px">Germany</div>
<div class="t ax" style="left:555.3px;letter-spacing:0.053px">France</div>
<div class="t ax" style="left:697.4px;letter-spacing:-0.013px">Canada</div>
<div class="t ax" style="left:838px;letter-spacing:0.373px">Australia</div>
<div class="t" style="left:437.6px;top:653px;font-family:'Liberation Serif',serif;font-size:21.6px;color:#22605f;letter-spacing:0.162px">Country Name</div>

<div class="abs" id="pagetabs"></div>
<div class="abs" id="statusbar"></div>
<div class="abs" style="left:44px;top:682px;width:918px;height:6.5px;background:linear-gradient(#e0e0e0,#d2d2d2)"></div>
<div class="abs" style="left:77px;top:688.5px;width:1px;height:34px;background:#8a8a8a"></div>
<div class="abs" style="left:78px;top:688.5px;width:126px;height:34px;background:#fff"></div>
<div class="abs" style="left:79px;top:721.7px;width:125px;height:2.3px;background:#f2c744"></div>
<div class="abs" style="left:204px;top:689px;width:39px;height:35px;background:#f5c642"></div>
<div class="t" style="left:100.5px;top:701.6px;font-size:11.8px;color:#707070;letter-spacing:-0.411px">RIBBON CHART</div>
<svg width="300" height="40" style="left:0;top:688px" viewBox="0 688 300 40" fill="none">
 <path d="M55 702 L51 706 L55 710 Z" fill="#c6c6c6"/><path d="M65.5 702 L69.5 706 L65.5 710 Z" fill="#c6c6c6"/>
 <path d="M223.5 700.6 V711.8 M217.9 706.2 H229.1" stroke="#6e6545" stroke-width="2.6"/>
</svg>

<div class="abs" id="vizpane"></div>
<div class="abs" id="fieldspane"></div>
<style>
.vt{font-size:12px;color:#fff;left:972.5px}
.pk{position:absolute;left:1100px;width:43.5px;height:23px;border:1px solid #262524;background:#434241}
.sw{position:absolute;left:1105.5px;width:12.3px;height:12px;box-shadow:0 0 0 .6px rgba(0,0,0,.35)}
</style>
<div class="abs" style="left:962px;top:194.5px;width:197.5px;height:123.5px;background:#3d3c3b"></div>
<div class="abs" style="left:962px;top:355.3px;width:197.5px;height:368px;background:#3b3a39"></div>
<div class="abs" style="left:1015.3px;top:352.3px;width:35.5px;height:3px;background:#e8c262"></div>
<div class="abs" style="left:967.4px;top:358.8px;width:188px;height:29.4px;background:#222120;border:1px solid #4a4948"></div>
<div class="abs" style="left:967.4px;top:394px;width:192px;height:23.5px;background:#484746;border-bottom:1px solid #2c2b2a"></div>
<div class="abs" style="left:967.4px;top:417.5px;width:192px;height:288px;background:#444342"></div>
<div class="abs" style="left:1153.4px;top:448.6px;width:5px;height:151px;background:#8d8d8d;border-radius:2.5px"></div>
<div class="t" style="left:975.6px;top:163.8px;font-size:14px;font-weight:bold;color:#fff;transform-origin:0 0;transform:scaleX(.933)">VISUALIZATIONS</div>
<div class="t" style="left:1003px;top:368.4px;font-size:12.2px;color:#a6a6a6;letter-spacing:-0.188px">Search</div>
<div class="t" style="left:991px;top:394.6px;font-size:12.5px;color:#fff;letter-spacing:-0.385px">Data colors</div>
<div class="t" style="left:1169.4px;top:209.5px;font-size:15px;font-weight:bold;color:#fff;transform-origin:0 0;transform:rotate(90deg) translateY(-100%) scaleX(.872)">FIELDS</div>
<div class="t vt" style="top:430.5px;letter-spacing:-0.569px">Black</div>
<div class="pk" style="top:424.2px"></div><div class="sw" style="top:429.1px;background:#00695e"></div>
<div class="t vt" style="top:466.5px;letter-spacing:-0.633px">Blue</div>
<div class="pk" style="top:460.2px"></div><div class="sw" style="top:465.1px;background:#262626"></div>
<div class="t vt" style="top:502.5px;letter-spacing:0.331px">Multi</div>
<div class="pk" style="top:496.2px"></div><div class="sw" style="top:501.1px;background:#fd625e"></div>
<div class="t vt" style="top:538.5px;letter-spacing:-0.586px">NA</div>
<div class="pk" style="top:532.2px"></div><div class="sw" style="top:537.1px;background:#5c3b58"></div>
<div class="t vt" style="top:574.5px;letter-spacing:-0.672px">Red</div>
<div class="pk" style="top:568.2px"></div><div class="sw" style="top:573.1px;background:#8a2d35"></div>
<div class="t vt" style="top:610.8px;letter-spacing:-0.253px">Silver</div>
<div class="pk" style="top:604.5px"></div><div class="sw" style="top:609.4px;background:#8ad4eb"></div>
<div class="t vt" style="top:646.9px;letter-spacing:-0.037px">White</div>
<div class="pk" style="top:640.6px"></div><div class="sw" style="top:645.5px;background:#fe9666"></div>
<div class="t vt" style="top:682.8px;letter-spacing:-0.208px">Yellow</div>
<div class="pk" style="top:676.5px"></div><div class="sw" style="top:681.4px;background:#f5c83a"></div>
<svg width="1193" height="726" style="left:0;top:0" viewBox="0 0 1193 726" fill="none">
<g fill="#c4c4c4"><path d="M1123.7 435.0 h7.2 l-3.6 3.9z"/><path d="M1123.7 471.0 h7.2 l-3.6 3.9z"/><path d="M1123.7 507.0 h7.2 l-3.6 3.9z"/><path d="M1123.7 543.0 h7.2 l-3.6 3.9z"/><path d="M1123.7 579.0 h7.2 l-3.6 3.9z"/><path d="M1123.7 615.3 h7.2 l-3.6 3.9z"/><path d="M1123.7 651.4 h7.2 l-3.6 3.9z"/><path d="M1123.7 687.3 h7.2 l-3.6 3.9z"/></g>
<path d="M1139.6 165.2 L1145.4 171 L1139.6 176.8" stroke="#d0d0d0" stroke-width="1.3"/>
<path d="M1180 165.2 L1174.2 171 L1180 176.8" stroke="#d0d0d0" stroke-width="1.3"/>
<circle cx="989.6" cy="371" r="4.3" stroke="#a6a6a6" stroke-width="1.2"/><path d="M986.5 374.2 L979.6 381" stroke="#a6a6a6" stroke-width="1.3"/>
<path d="M972.3 403.6 L977.6 398.2 L982.9 403.6" stroke="#e6e6e6" stroke-width="1.2"/>
<rect x="965.25" y="392" width="211" height="315.4" stroke="#fae936" stroke-width="3.5"/>
</svg>
<svg width="1193" height="726" style="left:0;top:0" viewBox="0 0 1193 726" fill="none">
<defs>
 <linearGradient id="og" x1="0" y1="0" x2="0" y2="1"><stop offset="0" stop-color="#ec915a"/><stop offset=".55" stop-color="#e9a57a"/><stop offset="1" stop-color="#bdb3ab"/></linearGradient>
 <linearGradient id="ogh" x1="0" y1="0" x2="1" y2="0"><stop offset="0" stop-color="#c2b7ae"/><stop offset=".45" stop-color="#e6a67e"/><stop offset="1" stop-color="#ec915a"/></linearGradient>
 <linearGradient id="bg" x1="0" y1="0" x2="0" y2="1"><stop offset="0" stop-color="#9dc0e6"/><stop offset=".55" stop-color="#a3bedd"/><stop offset=".75" stop-color="#b9a999"/><stop offset="1" stop-color="#8f8f8f"/></linearGradient>
 <linearGradient id="bgh" x1="0" y1="0" x2="1" y2="0"><stop offset="0" stop-color="#8d9088"/><stop offset=".38" stop-color="#9aa39e"/><stop offset=".45" stop-color="#a3c4e4"/><stop offset="1" stop-color="#a3c4e4"/></linearGradient>
 <linearGradient id="tg" x1="0" y1="0" x2="0" y2="1"><stop offset="0" stop-color="#f3d6a5"/><stop offset="1" stop-color="#e7c9a2"/></linearGradient>
 <g id="ax"><path d="M-8.5 -9 V8.5 H10" stroke="#a8a8a8" stroke-width="1"/></g>
</defs>
<!-- row1 -->
<g transform="translate(981 209)"><use href="#ax"/><rect x="-8" y="-6.5" width="12.2" height="5.8" fill="url(#ogh)"/><rect x="-8" y="0.7" width="15.2" height="5.8" fill="url(#ogh)"/></g>
<g transform="translate(1009 209)"><use href="#ax"/><rect x="-6.2" y="-4" width="5.6" height="12.5" fill="url(#og)"/><rect x="1" y="-7.2" width="5.6" height="15.7" fill="url(#og)"/></g>
<g transform="translate(1037 209)"><use href="#ax"/><rect x="-8" y="-7" width="10" height="3" fill="#f1d6a6"/><rect x="-8" y="-4" width="16" height="3" fill="#92b2dc"/><rect x="-8" y="1" width="13" height="3" fill="#f1d6a6"/><rect x="-8" y="4" width="9.5" height="3" fill="#92b2dc"/></g>
<g transform="translate(1064 209)"><use href="#ax"/><rect x="-6.6" y="-2" width="3" height="10.5" fill="#f1d6a6"/><rect x="-3.6" y="-8" width="3" height="16.5" fill="#92b2dc"/><rect x="1.4" y="-5" width="3" height="13.5" fill="#f1d6a6"/><rect x="4.4" y="-2" width="3" height="10.5" fill="#92b2dc"/></g>
<g transform="translate(1093 209)"><use href="#ax"/><rect x="-8" y="-6.5" width="15.5" height="5.8" fill="url(#bgh)"/><rect x="-8" y="0.7" width="15.5" height="5.8" fill="url(#bgh)"/></g>
<g transform="translate(1121 209)"><use href="#ax"/><rect x="-5.6" y="-7.2" width="5.4" height="15.7" fill="url(#bg)"/><rect x="2.4" y="-7.2" width="5.4" height="15.7" fill="url(#bg)"/></g>
<!-- row2 -->
<g transform="translate(981 233)"><use href="#ax"/><path d="M-8 5 L-1 -3 L3 1 L9 -6" stroke="#d8d8d8" stroke-width="1.1"/><path d="M-8 1 L-3 -4 L2 -6 L5 -2 L9 -3" stroke="#8a8a8a" stroke-width="1" stroke-dasharray="2 1"/></g>
<g transform="translate(1009 233)"><path d="M-9 9 V-3 L-5 -6.5 L-1 -3.5 L5 -8 L9 -4 V9 Z" fill="#f4e3c6"/><path d="M-1 -3.5 L5 -8 L9 -4 V9 H-1 L-3 2 Z" fill="#ec955f"/><path d="M-9 9 V3 L9 1 V9 Z" fill="#b9b6b4" fill-opacity=".75"/></g>
<g transform="translate(1037 233)"><path d="M-9 9 V-5 L-5 -8.5 L-0.5 -4 L4.5 -9 L9 -5 V9 Z" fill="#f0c08c"/><path d="M-9 2 L-5 -2.5 L-0.5 2 L4.5 -3 L9 1.5 V5 L4.5 1 L-0.5 6 L-5 1.5 L-9 5.5 Z" fill="#3d78b8"/><path d="M-9 9 V5.5 L-5 1.5 L-0.5 6 L4.5 1 L9 5 V9 Z" fill="#e9c7a4"/></g>
<g transform="translate(1064 233)"><path d="M-8.5 -9 V8.5 H9" stroke="#a8a8a8"/><path d="M8.5 -9 V8.5" stroke="#c98a62" stroke-width=".9"/><rect x="-5.4" y="-5.6" width="4.4" height="14.1" fill="url(#og)"/><rect x="1" y="-2" width="4.4" height="10.5" fill="url(#og)"/><path d="M-7 1 L-3 -0.5 L3 1.5 L8 -1" stroke="#e9a862" stroke-width="1"/></g>
<g transform="translate(1093 233)"><path d="M-8.5 -9 V8.5 H9" stroke="#a8a8a8"/><path d="M8.5 -9 V8.5" stroke="#c98a62" stroke-width=".9"/><rect x="-6.4" y="-1.5" width="3" height="10" fill="#f1d6a6"/><rect x="-3.4" y="-8" width="3" height="16.5" fill="#92b2dc"/><rect x="1.2" y="-5" width="3" height="13.5" fill="#f1d6a6"/><rect x="4.2" y="-1.5" width="3" height="10" fill="#e7bf98"/><path d="M-7 2 L-2 0.5 L3 2.5 L8 0" stroke="#e9a862" stroke-width="1"/></g>
<rect x="1110.6" y="222.7" width="20.8" height="20.4" fill="#2a2928" stroke="#f2dc5c" stroke-width="1.7"/>
<g transform="translate(1121 233)"><path d="M-7 8 V-2 H-3.4 C-2 -2 -2 -5 -0.8 -5 H2.6 C4 -5 4 -6.5 5 -6.5 H7.6 V8 Z" fill="#646362"/><rect x="-7" y="-2" width="3.6" height="10" fill="#777574"/><rect x="-1" y="-5" width="3.6" height="13" fill="#777574"/><rect x="4.6" y="-6.5" width="3.2" height="14.5" fill="#777574"/><path d="M-7 3.5 H7.8" stroke="#5a5958" stroke-width="1"/></g>
</svg>
<svg width="1193" height="726" style="left:0;top:0" viewBox="0 0 1193 726" fill="none">
<!-- row3 -->
<g transform="translate(981 257)"><use href="#ax"/><path d="M-6.5 8.5 V-5.5 H-3.5 V8.5" stroke="#e6d2b8" stroke-width="1.2"/><path d="M-3.5 -5.5 H-0.8 V3 H2 V-7" stroke="#e58a52" stroke-width="1.3"/><path d="M2 -7 H7.4 V8.5 M4.8 -7 V8.5" stroke="#e6e6e6" stroke-width="1.2"/></g>
<g transform="translate(1009 257)"><use href="#ax"/><circle cx="-5" cy="-3.2" r="1.5" fill="#e58a52"/><circle cx="3" cy="-5" r="1.5" fill="#9a9a9a"/><circle cx="0.2" cy="0.4" r="1.7" fill="#f1d6a6"/><circle cx="-6" cy="2.4" r="1.5" fill="#7e7e88"/><circle cx="7" cy="0.6" r="1.5" fill="#5e6fa8"/><circle cx="4" cy="4.4" r="1.5" fill="#9a9a9a"/></g>
<g transform="translate(1036.5 256.8)"><circle r="8.6" fill="#8fb3de"/><path d="M0 0 L-4.6 7.27 A8.6 8.6 0 0 1 -8.2 -2.6 Z" fill="#f2a3ad"/><path d="M0 0 L-8.2 -2.6 A8.6 8.6 0 0 1 0 -8.6 Z" fill="#f6e4bd"/><path d="M0 0 L-8.2 -2.6 M0 0 L-4.6 7.27 M0 0 V-8.6" stroke="#3d3c3b" stroke-width=".9"/></g>
<g transform="translate(1064.5 256.8)"><circle r="6.3" stroke="#447ab6" stroke-width="4.8"/><path d="M2.2 -5.9 A6.3 6.3 0 0 1 6.1 -1.6" stroke="#f0cf9a" stroke-width="4.8"/><path d="M1.5 -4 L3 -8.8 M3.8 -1 L8.8 -2.4" stroke="#3d3c3b" stroke-width=".9"/></g>
<g transform="translate(1093 256.8)"><rect x="-8.4" y="-8.5" width="16.6" height="17" fill="#fff"/><rect x="-4.6" y="-7.6" width="7.8" height="3.6" fill="#d9d5e8"/><rect x="-4.6" y="-3" width="7.8" height="3.8" fill="#d9d5e8"/><rect x="4.2" y="-7.6" width="3.2" height="8.4" fill="#d9d5e8"/><path d="M-8.4 1.6 H8.2 M-5.2 -8.5 V1.6 M-8.4 -3.6 H-5.2 M-0.4 1.6 V8.5 M3.7 -8.5 V1.6 M-5.2 -3.5 H3.7" stroke="#3d3c3b" stroke-width=".9"/></g>
<g transform="translate(1120.5 256.8)"><circle r="8" fill="#e4f5f9" stroke="#3b6c9c" stroke-width="1.3"/><path d="M-7.6 -2.6 H7.6 M-7.6 2.6 H7.6 M0 -8 V8 M-3.6 -7 C-5.6 -3 -5.6 3 -3.6 7 M3.6 -7 C5.6 -3 5.6 3 3.6 7" stroke="#6a9cc8" stroke-width=".75"/></g>
<!-- row4 -->
<g transform="translate(981 281)"><path d="M-9 -7 L-2 -6.4 L4 -7 L5.6 -3.6 L8 -4 L8.4 0 L5 2 L4.4 6 L0 7 L-3 4 L-6 3.4 L-8.4 -1 Z" fill="#6f95cf"/><path d="M-9 -7 L-2 -6.4 L-2.6 -2.6 L-8.6 -2.4 Z" fill="#dfe3f2"/><path d="M-2 -6.4 L4 -7 L5.6 -3.6 L1 -2 L-2.6 -2.6 Z" fill="#c7cbe6"/><path d="M-8.4 -1 L-2.6 -2.6 L-1 2.4 L-6 3.4 Z" fill="#3f68a8"/><path d="M1 -2 L5.6 -3.6 L8 -4 L8.4 0 L5 2 L0.6 1.6 Z" fill="#b9c4e6"/><path d="M6.4 -8 L9 -8.6 L9.4 -1 L7.6 -1.2 Z" fill="#f5e6a8"/><path d="M-4 4 L-1 6.8 L-2.6 8.6 Z" fill="#d9dcf0"/></g>
<g transform="translate(1009 281)"><rect x="-9" y="-7.6" width="18" height="3" fill="#92b2dc"/><rect x="-7" y="-3.4" width="14" height="3" fill="#f0c79e"/><rect x="-5" y="0.8" width="10" height="3" fill="#92b2dc"/><rect x="-3" y="5" width="6" height="2.6" fill="#8b9cb8"/></g>
<g transform="translate(1036.8 283.8)"><path d="M-7 2.7 V0 A7 7 0 0 1 4.4 -5.45" stroke="#f0c392" stroke-width="4.3"/><path d="M4.4 -5.45 A7 7 0 0 1 7 0 V2.7" stroke="#7f9d8d" stroke-width="4.3"/></g>
<g transform="translate(1065 280.3)"><rect x="-8.9" y="-6.3" width="17.8" height="12.5" fill="#fff"/><path d="M-6.4 4 H6.4" stroke="#4a6ea6" stroke-width="1"/><text x="0" y="1.6" text-anchor="middle" font-family="Liberation Sans, sans-serif" font-size="8.4" fill="#4a6ea6">123</text></g>
<g transform="translate(1093 280.8)"><rect x="-8.3" y="-8.3" width="16.5" height="16.5" fill="#fff"/><rect x="-6.8" y="-6.6" width="2" height="13.2" fill="#b4b4b4"/><path d="M-3 -5 H3.2 M-3 -2 H0 M-3 1.4 H2.8 M-3 4.6 H0.6" stroke="#8a8a8a" stroke-width="1.3"/></g>
<g transform="translate(1121 280.4)"><rect x="-8.9" y="-6.4" width="17.8" height="12.8" fill="#fbf6ee"/><path d="M-5.6 0.6 L-2.8 -3.4 L0 0.6 Z" fill="#6d9a80"/><path d="M1.2 -3.4 H6.8 L4 0.6 Z" fill="#e0785a"/><path d="M-6.4 3.6 H6.4" stroke="#777" stroke-width="1"/></g>
<!-- row5 -->
<g transform="translate(981 305)"><rect x="-9" y="-9" width="16.6" height="17.4" fill="#fff"/><rect x="-9" y="-9" width="16.6" height="2.6" fill="#5b8cbf"/><rect x="-7" y="-4.6" width="2.4" height="2.4" fill="#93acd6"/><rect x="-7" y="-0.6" width="2.4" height="2.4" fill="#eab08a"/><rect x="-7" y="3.4" width="2.4" height="2.4" fill="#eab08a"/><path d="M-0.6 -1.6 H10 L6.2 3.4 V10 L3.6 8.4 V3.4 Z" fill="#8a8a8a" stroke="#3d3c3b" stroke-width=".7"/></g>
<g transform="translate(1009 305)"><rect x="-8" y="-9" width="15.8" height="17.6" fill="#fff"/><rect x="-8" y="-9" width="15.8" height="2.8" fill="#5b8cbf"/><path d="M-8 -1.2 H7.8 M-8 3.8 H7.8 M-2.8 -6.2 V8.6 M2.6 -6.2 V8.6" stroke="#3d3c3b" stroke-width=".9"/></g>
<g transform="translate(1037 305)"><rect x="-8" y="-9" width="15.8" height="17.6" fill="#e9ecec"/><rect x="-8" y="-9" width="15.8" height="2.8" fill="#5b8cbf"/><rect x="-2.6" y="-6.2" width="10.4" height="5" fill="#f1ead9"/><path d="M-8 -1.2 H7.8 M-8 3.8 H7.8 M-2.8 -6.2 V8.6 M2.6 -6.2 V8.6" stroke="#6a6968" stroke-width=".7"/></g>
<text transform="translate(1065.4 313.5) scale(.86 1)" text-anchor="middle" font-family="Liberation Sans, sans-serif" font-weight="bold" font-size="23.4" fill="#8ea6d2">R</text>
<g fill="#fff"><rect x="1086.2" y="301.8" width="2" height="2"/><rect x="1092.3" y="301.8" width="2" height="2"/><rect x="1098.3" y="301.8" width="2" height="2"/></g>
<!-- pane tabs -->
<g stroke="#fff" stroke-width="1.2"><path d="M983.5 327.6 H999"/><rect x="983.6" y="330.4" width="19.4" height="6" stroke-dasharray="1.7 1.1"/><rect x="983.6" y="339.2" width="19.4" height="6" stroke-dasharray="1.7 1.1"/></g>
<g stroke="#fff" stroke-width="1.2"><rect x="1024.6" y="327.6" width="14.6" height="4.2" rx="1.6"/><path d="M1039.2 329.6 H1041.4 V335.6 H1032.8 V338.2"/><rect x="1030.8" y="338.2" width="4" height="8.2" rx=".8"/></g>
<g stroke="#fff" stroke-width="1.2"><circle cx="1071.2" cy="335" r="7.6"/><path d="M1076.6 340.4 L1083 346.8"/><path d="M1064.6 336.6 L1068.4 333.4 L1070.8 335.4 L1076.6 330.8"/><path d="M1066.4 341 V337.6 M1069.2 342 V337 M1072 342.2 V337.6 M1074.8 341.4 V335.6" stroke-width="1.1"/></g>
</svg>


<div class="abs" id="frame-top"></div>
<div class="abs" id="frame-left"></div>
<div class="abs" style="left:1192px;top:0;width:1px;height:726px;background:#5aa5dc"></div>
<div class="abs" style="left:1159px;top:147px;width:1px;height:577px;background:#0c0c0c"></div>
<div class="abs" style="left:962px;top:147px;width:1px;height:577px;background:#111"></div>
</body>
</html>
